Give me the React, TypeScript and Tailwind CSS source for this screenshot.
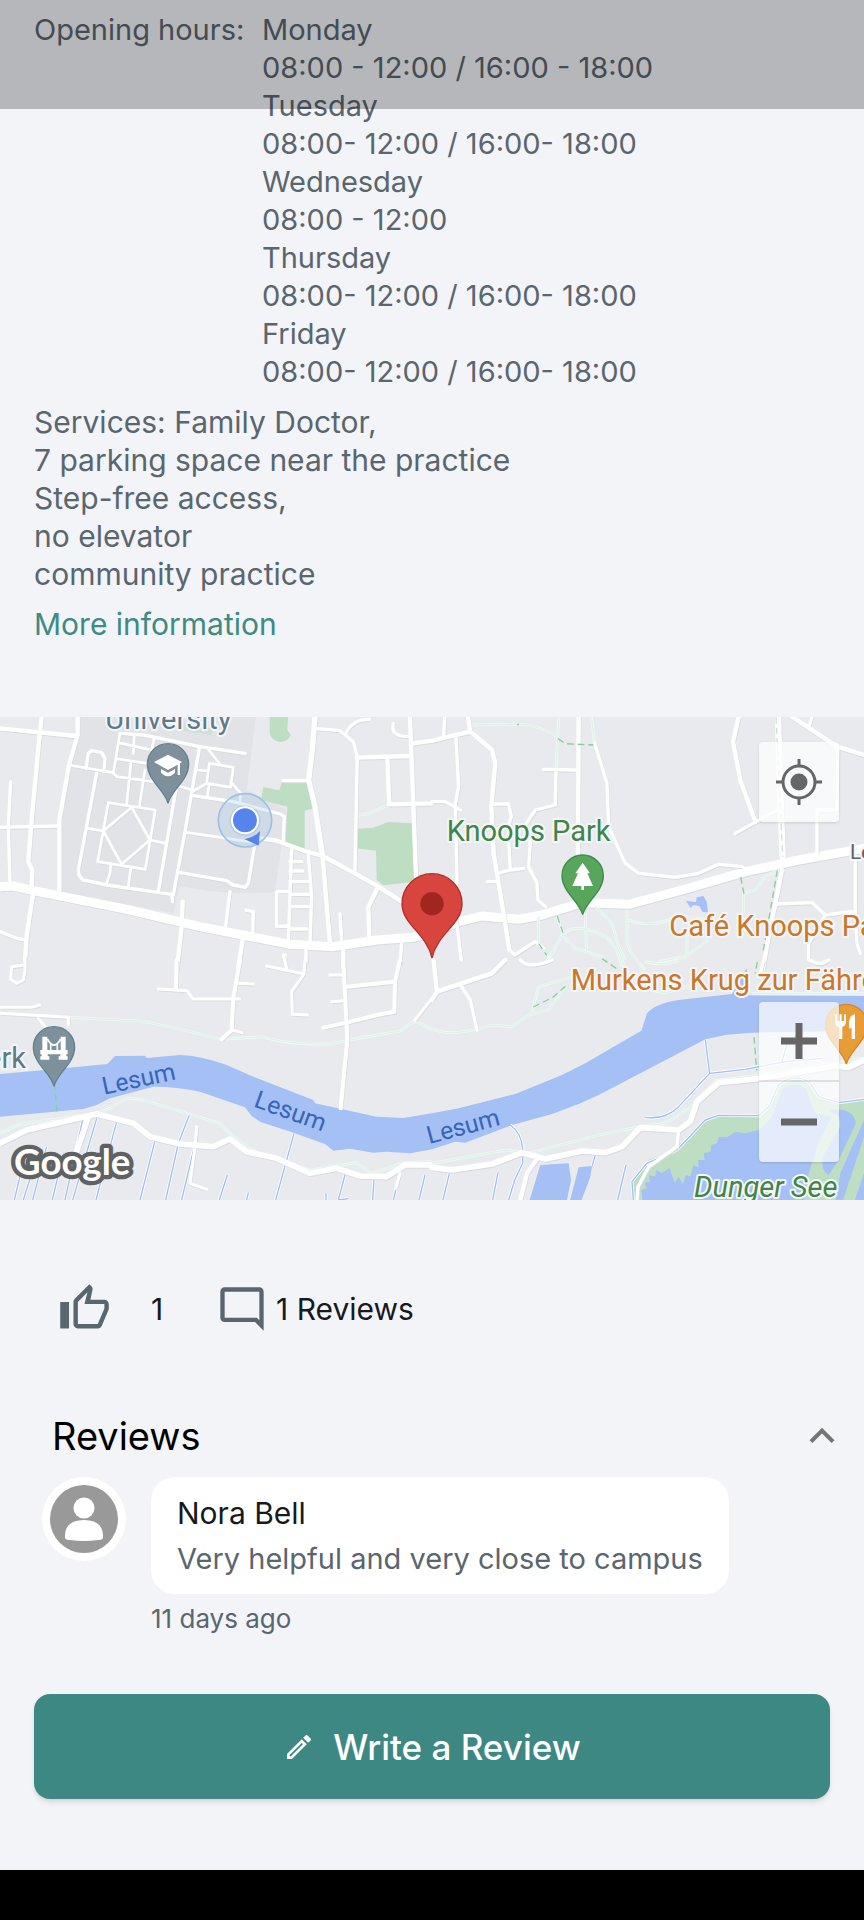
import { useState } from "react";
import {
  MdKeyboardArrowUp,
  MdOutlineEdit,
  MdOutlineModeComment,
  MdOutlineThumbUp,
} from "react-icons/md";

const hours = [
  { day: "Monday", time: "08:00 - 12:00 / 16:00 - 18:00" },
  { day: "Tuesday", time: "08:00- 12:00 / 16:00- 18:00" },
  { day: "Wednesday", time: "08:00 - 12:00" },
  { day: "Thursday", time: "08:00- 12:00 / 16:00- 18:00" },
  { day: "Friday", time: "08:00- 12:00 / 16:00- 18:00" },
];

const services = [
  "Services: Family Doctor,",
  "7 parking space near the practice",
  "Step-free access,",
  "no elevator",
  "community practice",
];

type Tile = {
  x: number;
  y: number;
  trails: string;
  roads: { w: number; d: string }[];
};

// The map is split into four tiles, each drawn in its own coordinates.
const tiles: Tile[] = [
  {
    x: 0,
    y: -21,
    trails: "M1065 318 L1110 310 L1168 283",
    roads: [
      { w: 8, d: "M360 70 L340 190 M355 98 L445 118 M355 147 L440 160 M403 75 L400 130 M462 88 L455 120 M393 155 L380 285 M435 180 L418 290 M325 278 L466 300 L436 478 L293 455 Z M395 292 L450 390 L365 463 L310 363 Z M262 355 L310 363 M450 390 L497 400 M332 467 L330 490 L320 520 M392 477 L385 530 M625 118 L660 162 M628 160 L700 172 L692 232 L620 220 Z M590 180 L622 183 M620 220 L580 243 M692 215 L722 250 L720 280 M628 222 L622 258 M558 367 L765 398 M205 165 L340 188 L350 200 L460 215 L545 230 L575 240" },
      { w: 10, d: "M360 70 L430 75 L600 110 L735 130 M258 175 L265 130 L275 122 L305 128 L315 145 L312 185 M290 190 L235 480 Q235 500 250 510 L320 525 L515 553 L518 575 M530 225 L475 545 M598 115 L555 365 L520 555 M575 256 L700 275 L840 312 L853 320 L850 390 M765 400 L745 520 L735 532 L700 525 L680 512 L540 488 M690 545 L677 650 M738 600 L760 605 L758 680 M875 415 L865 700 M925 430 L935 560 L930 700 M870 455 H905 M870 483 H908 M870 515 H925 M870 553 H932 M870 590 H935 M870 657 H920 M862 545 H830 V650 L862 648 M1020 612 L1025 690 M1040 65 Q1060 28 1108 28 M1180 40 Q1170 80 1225 80 M945 55 L1020 62 L1060 95 L1072 140 L1065 480 M0 665 L50 685 L75 690 M850 212 H926 M32 215 L25 350 L30 515 M0 352 L175 348 M1205 695 L1200 770 M855 735 V750 M918 720 V760" },
      { w: 13, d: "M0 55 L228 78 M125 20 L118 85 L95 330 L85 455 L97 480 L95 530 M233 20 V75 L208 160 L178 330 V540 M780 385 L830 392 L920 425 L968 438 L1060 488 L1135 530 L1205 575 M1070 143 L1235 138 M1162 140 L1168 283 L1296 280 M1230 20 L1240 280 L1248 500 M1240 100 L1296 92 M1135 530 L1105 590 L1108 680 M100 545 L80 680 L75 750 M548 575 L545 650 L530 780 M728 690 L715 770 M1030 710 V770 M968 440 L990 700" },
      { w: 16, d: "M945 20 L938 110 L926 210 L945 290 L968 440" },
      { w: 27, d: "M0 530 L40 528 L100 542 L380 598 L600 650 L870 703 L1000 710 L1130 690 L1240 682 L1316 660 L1376 635 L1446 618 L1556 628 L1626 615 L1746 578 L1886 583 L2046 540 L2236 485 L2396 450 L2592 415" },
    ],
  },
  {
    x: 1296,
    y: -21,
    trails:
      "M115 45 L260 42 Q340 50 380 85 M380 20 L372 180 M478 20 L488 100 M1040 480 L1000 500 L970 540 L935 550 V610 M490 590 L540 640 L560 710 L580 750 M585 600 V700 Q600 740 640 780 M590 630 Q660 660 740 615 L880 640 M460 610 L463 720 M375 620 L393 670 L360 730 L340 760 M395 670 Q430 640 500 670 Q550 690 570 770 M765 670 V740 M320 620 V700 M395 680 L430 715 L520 745 M830 690 L760 740 L680 755",
    roads: [
      { w: 10, d: "M38 20 L35 80 M0 275 H40 L85 300 M72 85 L80 230 L70 280 L75 500 L72 620 L88 750 M180 282 H230 L238 320 L228 350 L235 480 L275 475 M235 480 L205 488 M165 515 H190 M335 178 L430 180 M372 180 L370 285 L310 300 L280 345 L295 400 L290 470 L315 520 L318 570 L340 590 M488 100 L525 220 L530 350 L580 460 L620 490 L730 502 L800 490 L860 463 L930 470 M910 370 L1045 295 M1140 20 L1130 50 M1218 110 L1215 300 H1155 V430 M1270 440 V600 L1275 700 L1285 730 M1035 582 L1140 578 L1180 615 L1260 605 M1180 615 L1130 700 V750 M232 720 L248 735 L310 695 L335 715" },
      { w: 13, d: "M0 92 L115 65 L108 20 M115 65 L180 120 L190 160 L178 290 L185 430 L218 630 L232 720 M440 20 L438 430 M920 20 L903 95 L925 210 L970 335 M1050 480 L1010 680 L990 790 M1080 20 L1215 110 L1296 135" },
      { w: 19, d: "M1038 20 L1045 250 L1052 440" },
    ],
  },
  {
    x: 0,
    y: 729,
    trails:
      "M205 172 L420 183 Q520 200 660 238 L790 230 Q860 255 990 252 L1090 232 L1200 213 L1245 182 L1296 210 M0 520 L60 492 L290 460 L330 445 L380 415 L420 418 L570 463 L660 490 L690 520 L740 560 L800 590 L930 630 L1070 608 L1115 640 L1215 608 L1296 605",
    roads: [
      { w: 9, d: "M0 160 L205 172 V195 M0 142 H95 L118 135 M75 -10 V35 L70 60 L50 70 L32 58 L35 20 L75 15 M115 175 L135 200 M475 87 L560 92 L580 117 H718 M710 70 L760 72 M695 210 L725 218 M800 18 L912 42 L915 0 M850 -15 L860 25 M912 42 L875 95 L877 163 L922 165 M990 45 H1030 M995 125 L1030 122 M1296 115 L1245 180 M590 500 L585 560 L570 670 L620 688 M1200 640 L1187 685" },
      { w: 12, d: "M530 0 L528 88 M720 0 L700 115 L695 210 L665 238 M1030 0 L1042 240 L1022 445 M1040 80 L1185 65 M1200 0 L1185 65 L1183 155 L1130 165 L1040 188 L970 203" },
      { w: 17, d: "M0 550 L80 510 L290 462 L400 490 L450 530 L540 552 L640 560 L690 537 L740 575 L830 595 L930 640 L1010 625 L1080 648 L1160 650 L1215 615 L1296 615 M265 470 L225 590" },
    ],
  },
  {
    x: 1296,
    y: 729,
    trails:
      "M0 205 Q50 235 180 195 L240 200 L290 165 L350 150 L405 75 M300 155 L320 80 L420 50 M0 610 L220 570 L290 580 L500 525 L625 500 L700 490 L780 440 L850 362 L960 348 L1296 295 M570 0 Q600 90 700 98 L780 75 M640 5 Q700 20 740 0 M960 100 L1296 100",
    roads: [
      { w: 10, d: "M85 75 L115 120 L135 210 M265 0 Q290 30 360 0 M995 0 L985 40 M1135 0 Q1160 20 1190 0 M740 510 L735 560 L650 620 L618 680 L615 720" },
      { w: 13, d: "M5 0 L15 95 L180 40 L220 0 M0 120 L15 95 M320 590 L285 640 L265 720" },
      { w: 17, d: "M0 622 L60 630 L180 612 L270 578 L340 597 L450 573 L520 578 L570 560 L625 503 L740 510 L775 485 L795 425 L860 368 L970 357 L1210 318 L1250 322 L1296 300" },
    ],
  },
];

const pinShape = "M0 117 C-9 78 -62 48 -62 0 A62 62 0 0 1 62 0 C62 48 9 78 0 117Z";

function MapDrawing() {
  return (
    <svg
      viewBox="0 0 2592 1449"
      preserveAspectRatio="xMidYMid slice"
      className="block h-full w-full"
      role="img"
      aria-label="Map of the practice"
    >
      <rect width="2592" height="1449" fill="#e8eaed" />

      <g transform="translate(0 -21)">
        <path d="M233 20 H768 L740 240 L860 300 L825 545 Q680 560 540 528 L520 610 L180 545 L178 330 L208 160Z" fill="#e2e3e6" />
        <g fill="#bedec4">
          <path d="M809 20 H864 L862 60 L872 75 Q865 95 840 96 Q812 92 809 65Z" />
          <path d="M790 231 L838 241 L848 210 L930 218 L942 295 L914 302 V420 L857 400 L862 290 L783 270Z" />
          <path d="M1068 357 L1120 353 L1165 336 L1235 340 L1244 515 L1150 526 L1130 510 L1128 422 L1068 415Z" />
          <path d="M550 40 L635 55 V74 L550 62Z" opacity=".5" />
        </g>
        <path d="M2058 573 L2088 576 L2090 562 L2110 558 L2120 575 L2124 607 L2108 606 L2098 588 L2080 585 L2072 594Z" fill="#a4c0f4" />
      </g>

      <g transform="translate(0 729)">
        <path
          d="M0 342 L160 328 L322 312 L345 288 L435 287 L440 294 L540 285 Q600 287 680 315 L760 350 L940 420 L945 430 L1130 470 L1210 474 L1296 460 L1376 445 L1546 402 L1686 345 L1756 310 L1924 212 L1941 160 Q1966 130 2036 120 L2196 102 L2240 25 L2245 106 L2592 108 V212 L2256 218 L2180 224 L2116 238 L1796 405 L1736 432 L1656 462 L1536 495 L1396 548 L1366 545 L1296 568 L1230 580 L1160 575 L1120 578 L1050 566 L1000 572 L975 552 L885 520 L780 485 L755 468 L735 442 L600 395 Q530 380 460 380 L330 415 L290 435 L250 447 L0 470Z"
          fill="#a4c0f4"
        />
        <g transform="translate(1296 0)">
          <path d="M735 570 L820 480 L860 468 L980 465 L1010 440 L1040 375 Q1090 340 1135 370 L1160 410 L1220 430 L1296 420 V730 H600 L597 670 L650 600Z" fill="#bedec4" />
          <g fill="#a4c0f4">
            <path d="M632 730 L628 690 L645 685 L638 668 L655 665 L650 645 L670 650 L672 630 L690 640 L712 624 L728 668 L740 650 L752 672 L762 645 L775 650 L785 615 L800 622 L798 600 L818 600 L815 580 L835 575 L838 555 L855 550 L860 530 L885 532 L910 515 L940 520 L980 510 L1020 470 L1050 390 Q1090 360 1120 385 L1150 460 L1200 470 L1160 550 L1130 640 L1115 730Z" />
            <path d="M1190 450 Q1265 440 1272 490 L1220 600 L1190 645 Q1165 630 1172 590 L1225 500 L1222 470Z" />
            <path d="M1296 480 L1225 640 L1210 730 H1230 L1296 530Z" />
            <path d="M1296 640 L1265 730 H1296Z" />
            <path d="M325 615 L410 610 L417 660 L403 730 H290Z M440 622 L480 618 L475 650 L445 730 H412Z" />
          </g>
        </g>
        <g fill="none" strokeLinejoin="round">
          {["#ffffff", "#9fbff6"].map((color, i) => (
            <path
              key={color}
              stroke={color}
              strokeWidth={i === 0 ? 9 : 4}
              d="M248 480 L195 720 M290 475 L218 720 M350 485 L288 720 M465 542 L420 720 M568 465 L535 550 L497 720 M583 560 L545 720 M882 520 L827 720 M682 645 L658 720 M1035 645 L1015 720 L1045 716 M1122 660 L1118 720 M1275 645 L1257 720 M1200 640 L1180 720 M62 640 L43 720 M95 640 L70 720 M140 560 L98 720 M190 580 L157 720 M745 698 L740 720 M978 700 V720 M1348 640 L1329 720 M1494 638 L1478 720 M1878 615 L1853 720 M1531 495 Q1566 520 1568 570 V610 L1544 660 L1526 720 M1786 585 L1776 620 M2116 240 L2129 340 L2036 440 Q1996 480 1934 472 M2129 340 L2236 328 L2356 305 L2466 295 M2368 230 L2346 305 M2031 570 L2116 480 L2156 466 L2276 467 L2306 440 L2336 375 Q2386 335 2431 370 L2456 410 L2516 428 L2592 418 M2031 570 L1940 610 L1896 665 L1900 720"
            />
          ))}
        </g>
      </g>

      {tiles.map((tile) => (
        <g
          key={`${tile.x}:${tile.y}`}
          transform={`translate(${tile.x} ${tile.y})`}
          fill="none"
          strokeLinejoin="round"
        >
          <path d={tile.trails} stroke="#f3faf7" strokeWidth="8" />
          <path d={tile.trails} stroke="#dcf3ea" strokeWidth="4" />
          {tile.roads.map((road) => (
            <path key={`edge${road.w}`} d={road.d} stroke="#d9dbdf" strokeWidth={road.w} transform="translate(2 3)" />
          ))}
          {tile.roads.map((road) => (
            <path key={`road${road.w}`} d={road.d} stroke="#ffffff" strokeWidth={road.w} strokeLinecap="round" />
          ))}
        </g>
      ))}

      <g fill="none" stroke="#86cf9c" strokeWidth="4" strokeDasharray="20 12">
        <path d="M1674 65 L1696 80 L1780 84 M1556 20 L1552 25 M1672 598 L1690 650 M2222 480 L2232 530 M2332 460 L2290 700 M1600 870 L1660 840 L1705 800 M1616 680 L1640 715 M1806 725 L1850 755 M163 1100 L172 1195 M2262 960 L2270 1060 M2272 735 L2265 770" />
        <path d="M2328 0 L2348 420" stroke="#cfe2d5" />
      </g>

      <g transform="translate(504 142)">
        <path d={pinShape} fill="#7d909b" stroke="#63808c" strokeWidth="4" />
        <path d="M-42 -7 L0 -29 L42 -7 L36 -3 V32 H29 V1 L0 17Z M-21 14 L0 25 L21 14 V25 Q0 47 -21 25Z" fill="#fff" />
      </g>
      <g transform="translate(1748 476)">
        <path d={pinShape} fill="#58a65c" stroke="#3f8c4a" strokeWidth="4" />
        <path d="M0 -39 L22 -7 H14 L31 31 H4 V43 H-4 V31 H-31 L-14 -7 H-22Z" fill="#fff" />
      </g>
      <g transform="translate(162 991)">
        <path d={pinShape} fill="#7d909b" stroke="#63808c" strokeWidth="4" />
        <path d="M-35 -32 H-20 V8 H20 V-32 H35 V8 H41 V21 H37 V27 H41 V37 H14 V27 H19 V21 H-19 V27 H-14 V37 H-41 V27 H-37 V21 H-41 V8 H-35Z" fill="#fff" />
        <path d="M-20 -25 Q0 12 20 -25 M-10 -10 V8 M10 -10 V8" fill="none" stroke="#fff" strokeWidth="5" />
      </g>
      <g transform="translate(2539 924)">
        <path d={pinShape} fill="#e79c36" stroke="#d98520" strokeWidth="4" />
        <path d="M-34 -32 H-28 V-12 H-21 V-32 H-14 V-12 H-7 V-32 H-1 V-10 Q-1 2 -12 6 V42 H-22 V6 Q-34 2 -34 -10Z M26 -32 V42 H16 V10 H8 V-10 Q10 -30 26 -32Z" fill="#fff" />
      </g>

      <g>
        <circle cx="735" cy="310" r="80" fill="#9cc4e8" fillOpacity=".28" stroke="#9cc0e6" strokeWidth="5" />
        <circle cx="735" cy="311" r="46" fill="#8796a8" fillOpacity=".25" />
        <circle cx="735" cy="310" r="39" fill="#5585ec" stroke="#fff" strokeWidth="6" />
        <path d="M734 367 Q765 360 780 341 L776 386Z" fill="#5585ec" />
      </g>

      <g transform="translate(1296 560)">
        <path d="M0 163 C-15 90 -90 62 -90 0 A90 90 0 0 1 90 0 C90 62 15 90 0 163Z" fill="#d8453e" stroke="#b22e28" strokeWidth="4" />
        <circle r="35" fill="#a12620" />
      </g>

      <g className="font-[Roboto,sans-serif]" fontSize="87" stroke="#f4f6f8" strokeWidth="12" strokeLinejoin="round" paintOrder="stroke">
        <text x="316" y="37" fill="#5f7a87">University</text>
        <text x="1340" y="371" fill="#3f8548">Knoops Park</text>
        <text x="2008" y="657" fill="#cb7728">Café Knoops Park</text>
        <text x="1712" y="819" fill="#cb7728">Murkens Krug zur Fähre</text>
        <text x="78" y="1054" textAnchor="end" fill="#5f7a87">Wasserwerk</text>
        <text x="2550" y="427" fontSize="62" fill="#5f6368">Lesumer</text>
        <text x="2082" y="1441" fontStyle="italic" fill="#3f8548">Dunger See</text>
      </g>
      <g className="font-[Roboto,sans-serif]" fontSize="74" fill="#3864ba">
        <text transform="translate(312 1133) rotate(-12)">Lesum</text>
        <text transform="translate(758 1168) rotate(20)">Lesum</text>
        <text transform="translate(1288 1281) rotate(-15)">Lesum</text>
      </g>
      <text
        x="42"
        y="1375"
        className="font-[Lato,sans-serif]"
        fontWeight="700"
        fontSize="110"
        fill="#fff"
        stroke="#5f6163"
        strokeWidth="26"
        strokeLinejoin="round"
        paintOrder="stroke"
      >
        Google
      </text>
    </svg>
  );
}

function PracticeMap() {
  return (
    <section className="relative h-[483px] w-full overflow-hidden">
      <MapDrawing />
      <button
        type="button"
        aria-label="My location"
        className="absolute top-[25px] right-[25px] flex size-20 items-center justify-center rounded-sm bg-white/70 shadow"
      >
        <svg viewBox="0 0 46 46" className="size-[46px]" fill="none" stroke="#666" strokeWidth="3">
          <circle cx="23" cy="23" r="16" />
          <circle cx="23" cy="23" r="8.5" fill="#666" stroke="none" />
          <path d="M23 0 V7 M23 39 V46 M0 23 H7 M39 23 H46" />
        </svg>
      </button>
      <div className="absolute top-[285px] right-[25px] flex w-20 flex-col rounded-sm bg-white/70 shadow">
        <button type="button" aria-label="Zoom in" className="flex h-20 items-center justify-center border-b-2 border-black/10">
          <svg viewBox="0 0 36 36" className="size-9" stroke="#666" strokeWidth="7">
            <path d="M18 0 V36 M0 18 H36" />
          </svg>
        </button>
        <button type="button" aria-label="Zoom out" className="flex h-20 items-center justify-center">
          <svg viewBox="0 0 36 36" className="size-9" stroke="#666" strokeWidth="7">
            <path d="M0 18 H36" />
          </svg>
        </button>
      </div>
    </section>
  );
}

function Avatar() {
  return (
    <svg viewBox="0 0 84 84" className="size-[84px] shrink-0" role="img" aria-label="Nora Bell">
      <circle cx="42" cy="42" r="42" fill="#fff" />
      <circle cx="42" cy="42" r="34" fill="#999" />
      <circle cx="42" cy="31" r="10.500" fill="#fff" />
      <path d="M23 61 Q22 43 42 43 Q62 43 61 61 Q60 63 56 63 Q42 65 28 63 Q24 63 23 61Z" fill="#fff" />
    </svg>
  );
}

export default function App() {
  const [open, setOpen] = useState(true);

  return (
    <div className="relative flex min-h-screen flex-col bg-[#f2f4f8] font-[Inter,sans-serif] text-[30px] leading-[38px] text-[#5a666e]">
      <div className="absolute inset-x-0 top-0 h-[109px] bg-black/25" />

      <section className="flex flex-col items-start gap-3 px-[34px] pt-[11px]">
        <div className="flex text-[29px]">
          <h2 className="w-[228px] shrink-0">Opening hours:</h2>
          <dl>
            {hours.map(({ day, time }) => (
              <div key={day}>
                <dt>{day}</dt>
                <dd>{time}</dd>
              </div>
            ))}
          </dl>
        </div>
        <div>
          {services.map((line) => (
            <p key={line}>{line}</p>
          ))}
        </div>
        <a href="#more" className="text-[#3d8b84]">
          More information
        </a>
      </section>

      <div className="pt-[74px]">
        <PracticeMap />
      </div>

      <div className="flex items-center pt-[82px] pl-[58px] text-[#17191c]">
        <button type="button" aria-label="Like" className="text-[#5a666e]">
          <MdOutlineThumbUp className="size-[53px]" />
        </button>
        <span className="w-[105px] pl-10">1</span>
        <button type="button" className="flex items-center gap-2">
          <MdOutlineModeComment className="size-[52px] text-[#5a666e]" />
          <span>1 Reviews</span>
        </button>
      </div>

      <section className="pt-[71px]">
        <button
          type="button"
          aria-expanded={open}
          onClick={() => setOpen(!open)}
          className="flex w-full items-center justify-between pr-[17px] pl-[52px]"
        >
          <span className="text-[38px] leading-[60px] text-black">Reviews</span>
          <MdKeyboardArrowUp className={open ? "size-[50px] text-[#757575]" : "size-[50px] rotate-180 text-[#757575]"} />
        </button>
        {open && (
          <article className="flex items-start gap-[25px] px-[42px] pt-[11px]">
            <Avatar />
            <div>
              <div className="rounded-3xl bg-white px-[26px] pt-[17px] pb-[16px]">
                <h3 className="text-[#17191c]">Nora Bell</h3>
                <p className="pt-2 text-[29px]">Very helpful and very close to campus</p>
              </div>
              <p className="pt-[6px] text-[26px]">11 days ago</p>
            </div>
          </article>
        )}
      </section>

      <div className="px-[34px] pt-[56px] pb-[71px]">
        <button
          type="button"
          className="flex h-[105px] w-full items-center justify-center gap-[18px] rounded-2xl bg-[#3d8883] text-[35px] font-medium text-white shadow-md"
        >
          <MdOutlineEdit className="size-8" />
          Write a Review
        </button>
      </div>

      <div className="min-h-[51px] grow bg-black" />
    </div>
  );
}
